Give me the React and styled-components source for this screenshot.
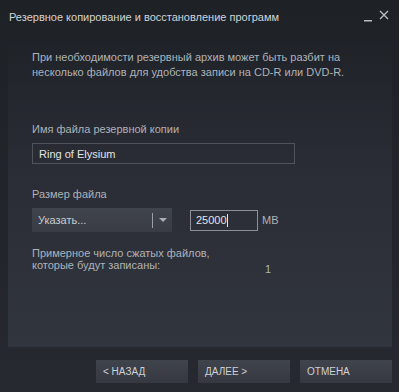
import React from "react";
import styled, { createGlobalStyle } from "styled-components";

const GlobalStyle = createGlobalStyle`
  html, body {
    margin: 0;
    padding: 0;
    background: #1f2227;
  }
  * {
    box-sizing: border-box;
  }
`;

const Window = styled.div`
  width: 399px;
  height: 392px;
  display: flex;
  flex-direction: column;
  background: linear-gradient(to bottom, #1e2126 0%, #22252b 60%, #262930 100%);
  font-family: "Liberation Sans", Arial, sans-serif;
  overflow: hidden;
`;

const TitleBar = styled.div`
  height: 36px;
  display: flex;
  align-items: flex-start;
  justify-content: space-between;
  padding: 10px 10px 0 9px;
`;

const Title = styled.div`
  font-size: 11px;
  line-height: 14px;
  color: #d2d4d8;
`;

const WinButtons = styled.div`
  display: flex;
  align-items: flex-start;
  gap: 7px;
`;

const WinBtn = styled.svg`
  display: block;
`;

const Panel = styled.div`
  flex: 1;
  margin: 0 7px 0 8px;
  padding: 14px 20px 0 24px;
  background: linear-gradient(to bottom, rgba(35, 38, 44, 0) 0%, #2a2d35 45%, #31353e 100%);
  display: flex;
  flex-direction: column;
`;

const Text = styled.div`
  font-size: 11px;
  line-height: ${(p) => p.$lh || 15}px;
  color: #aeb2b9;
  white-space: nowrap;
  margin-top: ${(p) => p.$mt || 0}px;
  width: ${(p) => (p.$w ? `${p.$w}px` : "auto")};
`;

const TextInput = styled.div`
  width: 263px;
  height: 21px;
  margin-top: ${(p) => p.$mt || 0}px;
  border: 1px solid ${(p) => p.$border || "#4f535b"};
  padding: 0 0 0 6px;
  display: flex;
  align-items: center;
  font-size: 11px;
  color: #e2e4e8;
`;

const SizeRow = styled.div`
  display: flex;
  align-items: center;
  margin-top: 6px;
  height: 24px;
`;

const Select = styled.div`
  width: 140px;
  height: 24px;
  display: flex;
  align-items: center;
  background: linear-gradient(to bottom, #40444c, #393c44);
  font-size: 11px;
  color: #c9ccd1;
  padding-left: 6px;
`;

const SelectLabel = styled.span`
  flex: 1;
`;

const SelectDivider = styled.span`
  width: 1px;
  height: 15px;
  background: #9a9ea5;
`;

const Arrow = styled.span`
  width: 19px;
  display: flex;
  justify-content: center;
  &::after {
    content: "";
    border-left: 4px solid transparent;
    border-right: 4px solid transparent;
    border-top: 4px solid #a9adb4;
  }
`;

const NumberInput = styled(TextInput)`
  width: 68px;
  margin-left: 18px;
  padding-left: 5px;
`;

const Caret = styled.span`
  display: inline-block;
  width: 1px;
  height: 13px;
  background: #e2e4e8;
`;

const Unit = styled.span`
  margin-left: 4px;
  font-size: 11px;
  color: #aeb2b9;
`;

const CountRow = styled.div`
  display: flex;
  margin-top: 15px;
`;

const CountValue = styled.div`
  margin-top: 16px;
  font-size: 11px;
  color: #aeb2b9;
`;

const Footer = styled.div`
  height: 45px;
  display: flex;
  justify-content: flex-end;
  gap: 10px;
  padding: 13px 7px 0 0;
`;

const Button = styled.button`
  width: 92px;
  height: 23px;
  border: none;
  padding: 0 0 0 7px;
  text-align: left;
  background: linear-gradient(to bottom, #40444d, #353841);
  color: #cdd0d5;
  font-family: "Liberation Sans", Arial, sans-serif;
  font-size: 10px;
  cursor: pointer;
`;

export default function App() {
  return (
    <>
      <GlobalStyle />
      <Window>
        <TitleBar>
          <Title>Резервное копирование и восстановление программ</Title>
          <WinButtons>
            <WinBtn width="8" height="12" viewBox="0 0 8 12">
              <rect x="0" y="10" width="8" height="1.5" fill="#b8bbc1" />
            </WinBtn>
            <WinBtn width="10" height="10" viewBox="0 0 10 10">
              <path d="M1 1 L9 9 M9 1 L1 9" stroke="#b8bbc1" strokeWidth="1.4" />
            </WinBtn>
          </WinButtons>
        </TitleBar>
        <Panel>
          <Text>
            При необходимости резервный архив может быть разбит на
            <br />
            несколько файлов для удобства записи на CD-R или DVD-R.
          </Text>
          <Text $mt={42}>Имя файла резервной копии</Text>
          <TextInput $mt={6}>Ring of Elysium</TextInput>
          <Text $mt={23}>Размер файла</Text>
          <SizeRow>
            <Select>
              <SelectLabel>Указать...</SelectLabel>
              <SelectDivider />
              <Arrow />
            </Select>
            <NumberInput $border="#8c9097">
              25000
              <Caret />
            </NumberInput>
            <Unit>MB</Unit>
          </SizeRow>
          <CountRow>
            <Text $lh={12} $w={233}>
              Примерное число сжатых файлов,
              <br />
              которые будут записаны:
            </Text>
            <CountValue>1</CountValue>
          </CountRow>
        </Panel>
        <Footer>
          <Button>&lt; НАЗАД</Button>
          <Button>ДАЛЕЕ &gt;</Button>
          <Button>ОТМЕНА</Button>
        </Footer>
      </Window>
    </>
  );
}
